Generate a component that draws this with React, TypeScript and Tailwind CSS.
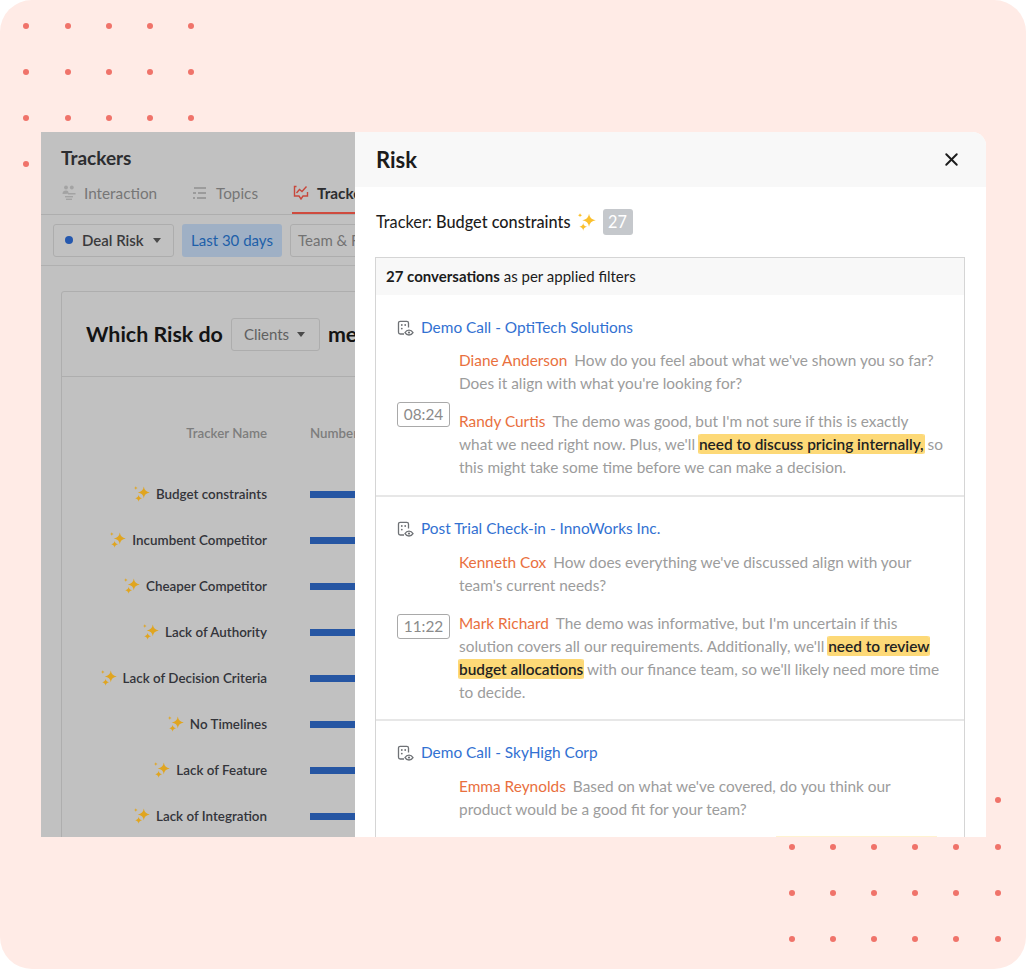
import React from 'react';
import { X } from 'lucide-react';

const DOTS_TOP = [26, 72, 118, 164];
const DOTS_X_TOP = [26, 68, 109, 150, 191];
const DOTS_BOTTOM = [847, 893, 939];
const DOTS_X_BOTTOM = [792, 833, 874, 915, 956, 998];

const rows = [
  'Budget constraints',
  'Incumbent Competitor',
  'Cheaper Competitor',
  'Lack of Authority',
  'Lack of Decision Criteria',
  'No Timelines',
  'Lack of Feature',
  'Lack of Integration',
];

function Sparkle({ size = 16, className = '' }: { size?: number; className?: string }) {
  return (
    <svg width={size} height={size} viewBox="0 0 16 16" className={className} fill="currentColor">
      <path d="M9.8 0.6 Q10.4 5.6 15.8 6.4 Q10.4 7.2 9.8 12.2 Q9.2 7.2 3.8 6.4 Q9.2 5.6 9.8 0.6 Z" />
      <path d="M4.6 8.8 Q4.9 11.6 8 12.2 Q4.9 12.8 4.6 15.8 Q4.3 12.8 1.2 12.2 Q4.3 11.6 4.6 8.8 Z" />
      <path d="M1.8 0.2 Q2 1.7 3.6 2 Q2 2.3 1.8 3.8 Q1.6 2.3 0 2 Q1.6 1.7 1.8 0.2 Z" />
    </svg>
  );
}

function CallIcon() {
  return (
    <svg width="17" height="17" viewBox="0 0 17 17" fill="none" stroke="#6f7276" strokeWidth="1.3" className="shrink-0">
      <path d="M7 14H3.2A1.7 1.7 0 0 1 1.5 12.3V3A1.7 1.7 0 0 1 3.2 1.3H9.8A1.7 1.7 0 0 1 11.5 3V7.5" />
      <circle cx="4.8" cy="5" r="0.9" fill="#6f7276" stroke="none" />
      <circle cx="8.2" cy="5" r="0.9" fill="#6f7276" stroke="none" />
      <circle cx="4.8" cy="8.6" r="0.9" fill="#6f7276" stroke="none" />
      <path d="M8 12.6C9 10.9 10.6 10.2 12 10.2S15 10.9 16 12.6C15 14.3 13.4 15 12 15S9 14.3 8 12.6Z" />
      <circle cx="12" cy="12.6" r="1.1" fill="#6f7276" stroke="none" />
    </svg>
  );
}

function Speaker({ name, children }: { name: string; children: React.ReactNode }) {
  return (
    <p className="text-[15.4px] leading-[23px] text-[#9c9c9c]">
      <span className="text-[#e9703e] mr-[7px]">{name}</span>
      {children}
    </p>
  );
}

function Mark({ children }: { children: React.ReactNode }) {
  return (
    <mark className="bg-[#fdd977] text-[#222222] font-semibold rounded-[2px] py-[1px] shadow-[1px_0_0_#fdd977,-1px_0_0_#fdd977] [box-decoration-break:clone]">
      {children}
    </mark>
  );
}

function Conversation({ title, children, last }: { title: string; children: React.ReactNode; last?: boolean }) {
  return (
    <div className={`pl-[21px] pr-[20px] pt-[21px] ${last ? 'pb-[40px]' : 'pb-[15px] border-b-2 border-[#e7e7e7]'}`}>
      <div className="flex items-center gap-[7px] h-[22px]">
        <CallIcon />
        <span className="text-[15.4px] text-[#3271d2]">{title}</span>
      </div>
      {children}
    </div>
  );
}

function Turn({ chip, chipClass = '', className = '', children }: { chip?: string; chipClass?: string; className?: string; children: React.ReactNode }) {
  return (
    <div className={`flex ${className}`}>
      <div className="w-[62px] shrink-0">
        {chip && (
          <div className={`w-[53px] h-[25px] border border-[#a9a9a9] rounded-[3px] flex items-center justify-center text-[15.4px] text-[#8b8b8b] ${chipClass}`}>
            {chip}
          </div>
        )}
      </div>
      <div className="w-[485px]">{children}</div>
    </div>
  );
}

export default function App() {
  return (
    <div className="relative w-[1026px] h-[969px] overflow-hidden bg-white" style={{ fontFamily: 'Lato, sans-serif' }}>
      <div className="w-full h-full rounded-[32px] bg-[#ffebe6] pl-[41px] pt-[132px]">
        {/* decorative dots */}
        {DOTS_TOP.map(y =>
          DOTS_X_TOP.map(x => (
            <span key={`${x}-${y}`} className="absolute w-[6px] h-[6px] rounded-full bg-[#f0736a]" style={{ left: x - 3, top: y - 3 }} />
          ))
        )}
        {DOTS_BOTTOM.map(y =>
          DOTS_X_BOTTOM.map(x => (
            <span key={`${x}-${y}`} className="absolute w-[6px] h-[6px] rounded-full bg-[#f0736a]" style={{ left: x - 3, top: y - 3 }} />
          ))
        )}
        <span className="absolute left-[995px] top-[797px] w-[6px] h-[6px] rounded-full bg-[#f0736a]" />

        <div className="relative flex w-[945px] h-[705px] overflow-hidden rounded-tr-[14px]">
          {/* Left pane, dimmed */}
          <div className="w-[314px] shrink-0 overflow-hidden bg-[#c1c1c1] text-[#2c2d30]">
            <div className="w-[700px]">
              <div className="pl-[20px] pt-[14px] text-[19px] font-bold leading-[24px]">Trackers</div>
              <div className="flex h-[45px] items-center border-b border-[#aeaeae] pl-[20px] pt-[2px] w-[314px]">
                <div className="flex items-center gap-[7px] text-[15.3px] text-[#767676] w-[131px] shrink-0">
                  <svg width="16" height="16" viewBox="0 0 16 16" fill="#a3a3a3">
                    <circle cx="5" cy="2.5" r="1.9" /><circle cx="10.8" cy="2.5" r="1.9" />
                    <path d="M1.5 9C1.5 6.6 3 5.6 5 5.6S7.5 6.6 7.5 8H14.5V9.5H7V8.8L1.5 9Z" />
                    <rect x="4" y="11" width="8" height="1.4" /><rect x="5" y="13.6" width="6" height="1.4" />
                  </svg>
                  Interaction
                </div>
                <div className="flex items-center gap-[9px] text-[15.3px] text-[#767676] w-[101px] shrink-0">
                  <svg width="15" height="14" viewBox="0 0 15 14" fill="none" stroke="#8f8f8f" strokeWidth="1.4">
                    <path d="M2 2H14" />
                    <path d="M1 7H4M6 7H14" />
                    <path d="M1 12H3M5 12H14" />
                  </svg>
                  Topics
                </div>
                <div className="relative flex h-full items-center gap-[8px] text-[15.3px] font-bold whitespace-nowrap shrink-0">
                  <svg width="16" height="16" viewBox="0 0 16 16" fill="none" stroke="#c8483c" strokeWidth="1.4" className="shrink-0">
                    <path d="M3.5 1.5H1.5V11H6L8 14L10 11H14.5V7" />
                    <path d="M3.5 8L6.5 4.5L9 6.5L13.5 1.5" />
                  </svg>
                  Trackers
                  <span className="absolute -left-[1px] right-0 bottom-0 h-[2px] bg-[#cf4b3e]" />
                </div>
              </div>

              <div className="flex items-center gap-[8px] h-[51px] pl-[12px] border-b border-[#b0b0b0] w-[314px]">
                <div className="flex items-center h-[33px] w-[121px] shrink-0 border border-[#adadad] rounded-[3px] pl-[11px] text-[15px] font-semibold text-[#3a3a3c]">
                  <span className="w-[8px] h-[8px] rounded-full bg-[#2558ae] mr-[9px]" />
                  Deal Risk
                  <span className="ml-[9px] border-x-[4px] border-x-transparent border-t-[5px] border-t-[#4a4a4a]" />
                </div>
                <div className="flex items-center justify-center h-[33px] w-[100px] shrink-0 rounded-[3px] bg-[#9fb0c5] text-[15px] text-[#1d5fa9]">
                  Last 30 days
                </div>
                <div className="flex items-center h-[33px] w-[140px] shrink-0 border border-[#adadad] rounded-[3px] pl-[7px] text-[15px] text-[#727272] whitespace-nowrap">
                  Team &amp; Rep
                </div>
              </div>

              <div className="ml-[20px] mt-[25px] w-[600px] border border-[#aeaeae] rounded-[3px] h-[600px]">
                <div className="flex items-center h-[85px] pl-[24px] border-b border-[#aeaeae]">
                  <span className="text-[21.4px] font-bold text-[#141414]">Which Risk do</span>
                  <div className="flex items-center h-[33px] w-[89px] mx-[8px] border border-[#adadad] rounded-[3px] pl-[12px] text-[15px] text-[#606060]">
                    Clients
                    <span className="ml-[8px] border-x-[4px] border-x-transparent border-t-[5px] border-t-[#4a4a4a]" />
                  </div>
                  <span className="text-[21.4px] font-bold text-[#141414]">mention</span>
                </div>
                <div className="flex pt-[46px] text-[13.3px] leading-[20px] text-[#7d7d7d] font-semibold">
                  <div className="w-[205px] text-right">Tracker Name</div>
                  <div className="ml-[43px]">Number of conversations</div>
                </div>
                <div className="pt-[28px]">
                  {rows.map(r => (
                    <div key={r} className="flex items-center h-[46px]">
                      <div className="w-[205px] flex items-center justify-end gap-[6px] text-[13.4px] font-semibold text-[#33343a]">
                        <Sparkle size={16} className="text-[#e0a520]" />
                        {r}
                      </div>
                      <div className="ml-[43px] w-[200px] h-[7px] bg-[#2656a3]" />
                    </div>
                  ))}
                </div>
              </div>
            </div>
          </div>

          {/* Right pane */}
          <div className="flex-1 min-w-0 bg-white text-[#1c1c1c]">
            <div className="flex items-center justify-between h-[55px] bg-[#f8f8f8] pl-[21px] pr-[24px]">
              <span className="text-[22px] font-bold">Risk</span>
              <X size={21} strokeWidth={2.2} />
            </div>
            <div className="flex items-center h-[26px] mt-[22px] pl-[21px] text-[16.3px]">
              <span>Tracker:&nbsp;</span>
              <span className="font-medium">Budget constraints</span>
              <Sparkle size={18} className="text-[#fbc02d] ml-[7px]" />
              <span className="ml-[7px] w-[30px] h-[26px] rounded-[3px] bg-[#c5c8cc] text-white flex items-center justify-center">27</span>
            </div>
            <div className="ml-[20px] mt-[22px] w-[590px] border-x border-t border-[#d5d5d5]">
              <div className="h-[37px] mb-[1px] flex items-center bg-[#f8f8f8] pl-[10px] text-[15px]">
                <span className="font-bold mr-[4px]">27 conversations</span> as per applied filters
              </div>
              <Conversation title="Demo Call - OptiTech Solutions">
                <Turn className="mt-[10px]">
                  <Speaker name="Diane Anderson">How do you feel about what we've shown you so far? Does it align with what you're looking for?</Speaker>
                </Turn>
                <Turn chip="08:24" chipClass="-mt-[8px]" className="mt-[15px] pb-[1px]">
                  <Speaker name="Randy Curtis">
                    The demo was good, but I'm not sure if this is exactly what we need right now. Plus, we'll <Mark>need to discuss pricing internally,</Mark> so this might take some time before we can make a decision.
                  </Speaker>
                </Turn>
              </Conversation>
              <Conversation title="Post Trial Check-in - InnoWorks Inc.">
                <Turn className="mt-[11px]">
                  <Speaker name="Kenneth Cox">How does everything we've discussed align with your team's current needs?</Speaker>
                </Turn>
                <Turn chip="11:22" chipClass="mt-[2px]" className="mt-[15px]">
                  <Speaker name="Mark Richard">
                    The demo was informative, but I'm uncertain if this solution covers all our requirements. Additionally, we'll <Mark>need to review budget allocations</Mark> with our finance team, so we'll likely need more time to decide.
                  </Speaker>
                </Turn>
              </Conversation>
              <Conversation title="Demo Call - SkyHigh Corp" last>
                <Turn className="mt-[11px]">
                  <Speaker name="Emma Reynolds">Based on what we've covered, do you think our product would be a good fit for your team?</Speaker>
                </Turn>
              </Conversation>
            </div>
          </div>
          <span className="absolute left-[735px] bottom-0 w-[161px] h-[1px] bg-[#fff3d1]" />
        </div>
      </div>
    </div>
  );
}
